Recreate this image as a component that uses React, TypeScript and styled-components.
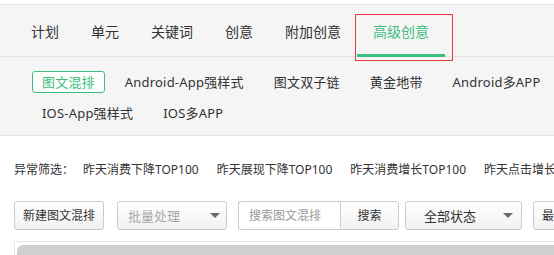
import React from "react";
import styled, { createGlobalStyle } from "styled-components";

const GlobalStyle = createGlobalStyle`
  html, body {
    margin: 0;
    padding: 0;
    background: #ffffff;
    overflow: hidden;
  }
  body {
    font-family: "Noto Sans", "Noto Sans CJK SC", sans-serif;
    color: #333333;
  }
  * { box-sizing: border-box; }
`;

const GREEN = "#3dbd7d";

const Page = styled.div`
  padding-top: 4px;
  width: 554px;
  overflow: hidden;
`;

const TabBar = styled.div`
  display: flex;
  height: 53px;
  padding-left: 15px;
  background: #f5f5f5;
  border-top: 1px solid #e4e4e4;
  border-bottom: 1px solid #e4e4e4;
`;

const Tab = styled.div<{ $active?: boolean }>`
  position: relative;
  padding: 0 16px;
  line-height: 53px;
  font-size: 14px;
  white-space: nowrap;
  color: ${(p) => (p.$active ? GREEN : "#333333")};
  ${(p) =>
    p.$active &&
    `
    &::after {
      content: "";
      position: absolute;
      left: 0;
      right: 0;
      bottom: -1px;
      height: 3px;
      background: ${GREEN};
    }
  `}
`;

const Highlight = styled.div`
  position: absolute;
  left: -2px;
  right: -8px;
  top: 9px;
  bottom: -5px;
  border: 1px solid #e8383d;
  pointer-events: none;
`;

const SubBar = styled.div`
  display: flex;
  flex-wrap: wrap;
  row-gap: 9px;
  column-gap: 10px;
  padding: 14px 0 11px 32px;
  background: #f5f5f5;
  border-bottom: 1px solid #e4e4e4;
`;

const SubTab = styled.div<{ $active?: boolean }>`
  height: 22px;
  line-height: 21px;
  padding: 0 9px;
  font-size: 13px;
  letter-spacing: 0.2px;
  white-space: nowrap;
  border: 1px solid ${(p) => (p.$active ? GREEN : "transparent")};
  border-radius: 3px;
  color: ${(p) => (p.$active ? GREEN : "#333333")};
  background: ${(p) => (p.$active ? "#ffffff" : "transparent")};
`;

const FilterRow = styled.div`
  display: flex;
  margin-top: 24px;
  padding-left: 14px;
  height: 20px;
  line-height: 20px;
  font-size: 12px;
  white-space: nowrap;
`;

const FilterLabel = styled.span`
  color: #333333;
`;

const FilterItem = styled.span`
  padding: 0 9px;
  color: #333333;
`;

const Toolbar = styled.div`
  display: flex;
  align-items: center;
  margin-top: 21px;
  padding-left: 14px;
  height: 29px;
  white-space: nowrap;
`;

const Button = styled.div<{ $gap?: number }>`
  flex: none;
  height: 29px;
  line-height: 27px;
  padding: 0 8px;
  margin-right: ${(p) => p.$gap ?? 0}px;
  font-size: 12px;
  color: #333333;
  border: 1px solid #cccccc;
  border-radius: 3px;
  background: linear-gradient(#ffffff, #f1f1f1);
`;

const Select = styled.div<{ $w: number; $pl: number; $pr: number; $muted?: boolean; $gap?: number }>`
  flex: none;
  display: flex;
  align-items: center;
  justify-content: space-between;
  width: ${(p) => p.$w}px;
  height: 29px;
  padding: 0 ${(p) => p.$pr}px 0 ${(p) => p.$pl}px;
  margin-right: ${(p) => p.$gap ?? 0}px;
  font-size: 13px;
  color: ${(p) => (p.$muted ? "#a8a8a8" : "#333333")};
  border: 1px solid #cccccc;
  border-radius: 3px;
  background: linear-gradient(#ffffff, #f1f1f1);
`;

const Caret = styled.span`
  width: 0;
  height: 0;
  border-left: 5px solid transparent;
  border-right: 5px solid transparent;
  border-top: 5px solid #6b6b6b;
`;

const SearchGroup = styled.div`
  flex: none;
  display: flex;
  margin-right: 6px;
`;

const SearchInput = styled.div`
  width: 102px;
  height: 29px;
  line-height: 27px;
  padding-left: 10px;
  font-size: 12px;
  color: #999999;
  background: #ffffff;
  border: 1px solid #cccccc;
  border-right: none;
  border-radius: 3px 0 0 3px;
`;

const SearchButton = styled.div`
  width: 59px;
  height: 29px;
  line-height: 27px;
  text-align: center;
  font-size: 12px;
  color: #333333;
  border: 1px solid #cccccc;
  border-radius: 0 3px 3px 0;
  background: linear-gradient(#ffffff, #f1f1f1);
`;

const TableFrame = styled.div`
  margin: 11px 0 0 14px;
  height: 20px;
  padding: 3px 0 0 2px;
  border: 1px solid #e6e6e6;
  border-right: none;
  background: #ffffff;
`;

const ScrollThumb = styled.div`
  height: 16px;
  border-radius: 6px 0 0 0;
  background: #cfcfcf;
`;

const tabs = ["计划", "单元", "关键词", "创意", "附加创意", "高级创意"];
const subTabs = [
  "图文混排",
  "Android-App强样式",
  "图文双子链",
  "黄金地带",
  "Android多APP",
  "IOS-App强样式",
  "IOS多APP",
];
const filters = [
  "昨天消费下降TOP100",
  "昨天展现下降TOP100",
  "昨天消费增长TOP100",
  "昨天点击增长TOP100",
];

export default function App() {
  return (
    <>
      <GlobalStyle />
      <Page>
        <TabBar>
          {tabs.map((t, i) => (
            <Tab key={t} $active={i === tabs.length - 1}>
              {t}
              {i === tabs.length - 1 && <Highlight />}
            </Tab>
          ))}
        </TabBar>
        <SubBar>
          {subTabs.map((t, i) => (
            <SubTab key={t} $active={i === 0}>
              {t}
            </SubTab>
          ))}
        </SubBar>
        <FilterRow>
          <FilterLabel>异常筛选：</FilterLabel>
          {filters.map((f) => (
            <FilterItem key={f}>{f}</FilterItem>
          ))}
        </FilterRow>
        <Toolbar>
          <Button $gap={13}>新建图文混排</Button>
          <Select $w={110} $pl={10} $pr={6} $muted $gap={11}>
            <span>批量处理</span>
            <Caret />
          </Select>
          <SearchGroup>
            <SearchInput>搜索图文混排</SearchInput>
            <SearchButton>搜索</SearchButton>
          </SearchGroup>
          <Select $w={117} $pl={18} $pr={8} $gap={11}>
            <span>全部状态</span>
            <Caret />
          </Select>
          <Button>最近7天数据</Button>
        </Toolbar>
        <TableFrame>
          <ScrollThumb />
        </TableFrame>
      </Page>
    </>
  );
}
